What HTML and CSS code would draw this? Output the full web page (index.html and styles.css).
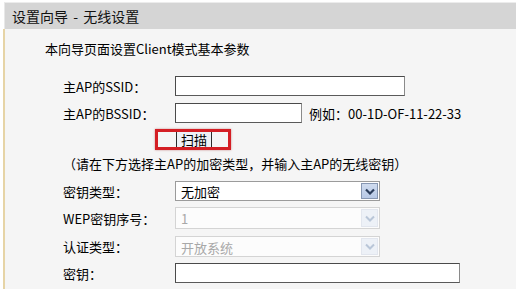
FILE: index.html
```html
<!DOCTYPE html>
<html lang="zh-CN">
<head>
<meta charset="utf-8">
<title>设置向导 - 无线设置</title>
<link rel="stylesheet" href="styles.css">
</head>
<body>
<div class="page">
  <div class="titlebar">设置向导 - 无线设置</div>
  <div class="panel">
    <div class="intro">本向导页面设置Client模式基本参数</div>
    <div class="row r-ssid">
      <span class="label">主AP的SSID：</span>
      <span class="input w-ssid"></span>
    </div>
    <div class="row r-bssid">
      <span class="label">主AP的BSSID：</span>
      <span class="input w-bssid"></span>
      <span class="hint">例如：00-1D-OF-11-22-33</span>
    </div>
    <div class="row r-scan">
      <span class="label"></span>
      <span class="scanwrap"><button class="btn">扫描</button></span>
    </div>
    <div class="note">（请在下方选择主AP的加密类型，并输入主AP的无线密钥）</div>
    <div class="row r-type">
      <span class="label">密钥类型：</span>
      <span class="select">
        <span class="sel-text">无加密</span>
        <span class="arrow"><svg width="10" height="7" viewBox="0 0 10 7"><path d="M1 1.5 L5 5.5 L9 1.5" fill="none" stroke="#2c3e5c" stroke-width="2.2"/></svg></span>
      </span>
    </div>
    <div class="row r-wep">
      <span class="label">WEP密钥序号：</span>
      <span class="select disabled">
        <span class="sel-text">1</span>
        <span class="arrow"><svg width="10" height="7" viewBox="0 0 10 7"><path d="M1 1.5 L5 5.5 L9 1.5" fill="none" stroke="#b9c6d8" stroke-width="2"/></svg></span>
      </span>
    </div>
    <div class="row r-auth">
      <span class="label">认证类型：</span>
      <span class="select disabled">
        <span class="sel-text">开放系统</span>
        <span class="arrow"><svg width="10" height="7" viewBox="0 0 10 7"><path d="M1 1.5 L5 5.5 L9 1.5" fill="none" stroke="#b9c6d8" stroke-width="2"/></svg></span>
      </span>
    </div>
    <div class="row r-key">
      <span class="label">密钥：</span>
      <span class="input w-key"></span>
    </div>
  </div>
</div>
</body>
</html>
```

FILE: styles.css
```css
html, body {
  margin: 0;
  padding: 0;
  background: #ffffff;
}
body {
  width: 516px;
  height: 289px;
  overflow: hidden;
  font-family: "Noto Sans CJK SC", "Noto Sans", sans-serif;
  font-size: 13px;
  color: #000000;
}
.page {
  padding-top: 2px;
}
.titlebar {
  margin-left: 4px;
  height: 26px;
  line-height: 26px;
  border-top: 1px solid #ececec;
  border-left: 1px solid #e8e8e8;
  background: #d5d5d5;
  padding-left: 7px;
  font-size: 14px;
  color: #111111;
  word-spacing: 2px;
}
.panel {
  margin-left: 3px;
  border-left: 2px solid #e6d4a6;
  background: #f5f5f5;
  height: 260px;
  padding-left: 40px;
  box-sizing: border-box;
}
.intro {
  padding-top: 10px;
  line-height: 20px;
  height: 20px;
}
.row {
  display: flex;
  align-items: center;
  padding-left: 18px;
}
.label {
  width: 112px;
  flex: none;
  white-space: nowrap;
}
.r-ssid { margin-top: 17px; height: 20px; }
.r-bssid { margin-top: 7px; height: 20px; }
.r-scan { margin-top: 8px; height: 17px; }
.note {
  margin-top: 7px;
  padding-left: 18px;
  line-height: 18px;
  height: 18px;
}
.r-type { margin-top: 8px; height: 20px; }
.r-wep { margin-top: 6px; height: 22px; }
.r-auth { margin-top: 7px; height: 21px; }
.r-key { margin-top: 6px; height: 20px; }

.input {
  display: block;
  height: 20px;
  box-sizing: border-box;
  background: #ffffff;
  border: 1px solid #8a8a8a;
  border-top-color: #4a4a4a;
  border-left-color: #4a4a4a;
  border-bottom-color: #5a5a5a;
}
.w-ssid { width: 230px; }
.w-bssid { width: 127px; }
.w-key { width: 285px; }
.hint {
  margin-left: 7px;
  white-space: nowrap;
}
.scanwrap {
  position: relative;
  display: block;
  margin-left: 1px;
}
.scanwrap::after {
  content: "";
  position: absolute;
  left: -21px;
  top: -2px;
  width: 76px;
  height: 21px;
  box-sizing: border-box;
  border: 3px solid #d41e24;
  box-shadow: 0 0 2px rgba(160, 40, 40, 0.5);
}
.btn {
  display: block;
  width: 36px;
  height: 17px;
  padding: 0;
  margin: 0;
  font-family: "Noto Sans CJK SC", sans-serif;
  font-size: 13px;
  line-height: 15px;
  color: #000;
  background: #eef1f6;
  border: 1px solid #2b2b2b;
}
.select {
  display: flex;
  align-items: stretch;
  width: 205px;
  height: 100%;
  box-sizing: border-box;
  background: #ffffff;
  border: 1px solid #9b9b9b;
  padding: 1px;
}
.sel-text {
  flex: 1;
  padding-left: 4px;
  line-height: 17px;
}
.arrow {
  width: 17px;
  flex: none;
  display: flex;
  align-items: center;
  justify-content: center;
  background: linear-gradient(#cfdbee, #b8c9e6);
  border: 1px solid #8797b2;
  box-sizing: border-box;
}
.select.disabled {
  border-color: #d4d4d4;
  background: #fcfcfc;
}
.select.disabled .sel-text {
  color: #a8a8a8;
  line-height: 19px;
}
.select.disabled .arrow {
  background: #edf1f7;
  border-color: #e2e6ee;
}
```
